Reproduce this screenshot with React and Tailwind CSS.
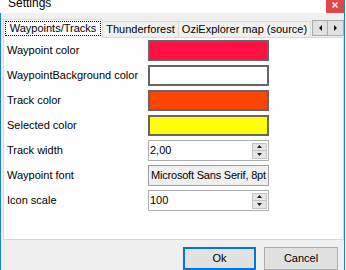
import React from 'react'

const font = { fontFamily: '"Liberation Sans", Arial, sans-serif' }

function Swatch({ color }) {
  return <div className={`h-[21px] border-2 border-[#666666] ${color}`} />
}

function Spinner() {
  return (
    <div className="flex flex-col w-[15px] h-[16px] my-auto mr-[1px]">
      <div className="flex-1 flex items-center justify-center bg-[#e6e6e6] border border-[#c4c4c4]">
        <svg width="5" height="3" viewBox="0 0 5 3"><path d="M2.5 0 L5 3 L0 3 Z" fill="#222" /></svg>
      </div>
      <div className="flex-1 flex items-center justify-center bg-[#e6e6e6] border border-t-0 border-[#c4c4c4]">
        <svg width="5" height="3" viewBox="0 0 5 3"><path d="M0 0 L5 0 L2.5 3 Z" fill="#222" /></svg>
      </div>
    </div>
  )
}

function NumBox({ value }) {
  return (
    <div className="h-[21px] flex bg-white border border-[#abadb3]">
      <span className="flex-1 pl-[1px] leading-[19px] text-[11px]">{value}</span>
      <Spinner />
    </div>
  )
}

export default function App() {
  const rows = [
    ['Waypoint color', <Swatch color="bg-[#ff1040]" />],
    ['WaypointBackground color', <Swatch color="bg-white" />],
    ['Track color', <Swatch color="bg-[#ff4500]" />],
    ['Selected color', <Swatch color="bg-[#ffff00]" />],
    ['Track width', <NumBox value="2,00" />],
    ['Waypoint font', (
      <div className="h-[21px] bg-[#f0f0f0] border border-[#a0a0a0] pl-[2px] leading-[19px] text-[11px] tracking-[-0.2px] whitespace-nowrap overflow-hidden">
        Microsoft Sans Serif, 8pt
      </div>
    )],
    ['Icon scale', <NumBox value="100" />],
  ]

  return (
    <div className="w-[346px] h-[270px] overflow-hidden bg-white text-black" style={font}>
      {/* Title bar */}
      <div className="flex h-[13px]">
        <div className="flex-1 overflow-hidden bg-white">
          <div className="-mt-[4px] ml-[8px] text-[12px] leading-[14px]">Settings</div>
        </div>
        <div className="w-[18px] bg-[#e04848] flex items-start justify-center pt-[2px]">
          <svg width="6" height="6" viewBox="0 0 6 6">
            <path d="M0.5 0.5 L5.5 5.5 M5.5 0.5 L0.5 5.5" stroke="white" strokeWidth="1.4" />
          </svg>
        </div>
        <div className="w-px bg-[#1883d7]" />
        <div className="w-px bg-white" />
      </div>

      {/* Body */}
      <div className="flex h-[257px]">
        <div className="w-px bg-[#1883d7]" />
        <div className="w-[343px] bg-[#f0f0f0] pt-[6px] pl-[2px] flex flex-col">
          {/* Tab strip */}
          <div className="flex items-end h-[18px] text-[11px] leading-none">
            <div className="relative z-10 w-[100px] h-[19px] -mb-px bg-white border border-b-0 border-[#d9d9d9] p-[1px]">
              <div className="h-[15px] border border-dotted border-black flex items-center justify-center whitespace-nowrap">
                Waypoints/Tracks
              </div>
            </div>
            <div className="w-[76px] h-[16px] border-t border-r border-[#d9d9d9] flex items-center justify-center whitespace-nowrap">
              Thunderforest
            </div>
            <div className="w-[132px] h-[16px] border-t border-r border-[#d9d9d9] flex items-center justify-center whitespace-nowrap">
              OziExplorer map (source)
            </div>
            <div className="ml-auto mb-[1px] flex h-[16px]">
              <div className="w-[16px] bg-[#e1e1e1] border border-[#adadad] flex items-center justify-center">
                <svg width="3" height="6" viewBox="0 0 3 6"><path d="M3 0 L0 3 L3 6 Z" fill="#111" /></svg>
              </div>
              <div className="w-[16px] bg-[#e1e1e1] border border-l-0 border-[#adadad] flex items-center justify-center">
                <svg width="3" height="6" viewBox="0 0 3 6"><path d="M0 0 L3 3 L0 6 Z" fill="#111" /></svg>
              </div>
            </div>
          </div>

          {/* Tab panel */}
          <div className="h-[209px] bg-white border border-[#d9d9d9] pt-[2px] pl-[3px]">
            <div className="grid grid-cols-[141px_121px] gap-y-[4px] text-[11px]">
              {rows.map(([label, control], i) => (
                <React.Fragment key={i}>
                  <div className="h-[21px] flex items-center whitespace-nowrap">{label}</div>
                  {control}
                </React.Fragment>
              ))}
            </div>
          </div>

          {/* Buttons */}
          <div className="flex justify-end gap-[8px] pr-[6px] mt-[7px] text-[11px]">
            <button className="w-[73px] h-[23px] bg-[#e1e1e1] border-2 border-[#0078d7]">Ok</button>
            <button className="w-[74px] h-[23px] bg-[#e1e1e1] border border-[#adadad]">Cancel</button>
          </div>
        </div>
        <div className="w-px bg-[#1883d7]" />
        <div className="w-px bg-white" />
      </div>
    </div>
  )
}
